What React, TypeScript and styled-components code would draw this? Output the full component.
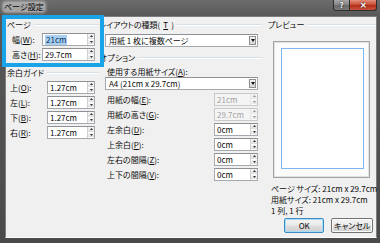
import React from 'react';
import styled, { createGlobalStyle } from 'styled-components';

const Global = createGlobalStyle`
  html, body { margin: 0; padding: 0; background: #3a3a3a; }
  body { font-family: "Noto Sans CJK JP", "Noto Sans", sans-serif; }
  * { box-sizing: border-box; }
`;

const Window = styled.div`
  position: relative;
  width: 380px;
  height: 243px;
  display: flex;
  flex-direction: column;
  padding: 0 3px 5px 5px;
  background: linear-gradient(#6d6d6d, #585858 16px, #4a4a4a);
  overflow: hidden;
  font-feature-settings: "palt";
`;

const TitleBar = styled.div`
  height: 16px;
  flex: none;
  display: flex;
  align-items: flex-start;
`;

const Title = styled.span`
  margin: 2px 0 0 -2px;
  padding: 0 1px;
  font-size: 8px;
  line-height: 10px;
  color: #000;
  background: rgba(220, 220, 220, 0.55);
  border-radius: 3px;
  box-shadow: 0 0 3px 1px rgba(220, 220, 220, 0.55);
`;

const Captions = styled.div`
  margin-left: auto;
  display: flex;
`;

const CaptionButton = styled.div<{ $close?: boolean }>`
  width: ${p => (p.$close ? 27 : 17)}px;
  height: 11px;
  display: flex;
  align-items: center;
  justify-content: center;
  border: 1px solid #2e2e2e;
  border-top: none;
  border-left: ${p => (p.$close ? 'none' : '1px solid #2e2e2e')};
  border-radius: ${p => (p.$close ? '0 0 3px 0' : '0 0 0 3px')};
  background: ${p =>
    p.$close
      ? 'linear-gradient(#e4907e, #c9503a 45%, #b5301b 55%, #c8533b)'
      : 'linear-gradient(#a8a8a8, #858585 45%, #6c6c6c 55%, #7a7a7a)'};
  color: #fff;
  font-size: 8px;
  font-weight: bold;
  line-height: 1;
  text-shadow: 0 0 2px #000;
`;

const Client = styled.div`
  flex: 1;
  display: grid;
  grid-template-columns: 94px 167px 1fr;
  background: #f0f0f0;
  border: 1px solid #7d7d7d;
  border-bottom: 1px solid #fff;
  font-size: 8px;
  color: #0a0a0a;
`;

const Column = styled.div<{ $pl: number }>`
  display: flex;
  flex-direction: column;
  padding-left: ${p => p.$pl}px;
`;

const GroupHeader = styled.div<{ $mt?: number; $mr?: number; $ml?: number }>`
  height: 15px;
  margin-top: ${p => p.$mt ?? 0}px;
  margin-right: ${p => p.$mr ?? 0}px;
  margin-left: ${p => p.$ml ?? 0}px;
  display: flex;
  align-items: center;
  gap: 3px;
  white-space: nowrap;
  &::after {
    content: '';
    flex: 1;
    height: 1px;
    background: #d5dfe5;
    box-shadow: 0 1px 0 #fff;
  }
`;

const Row = styled.div<{ $pl: number }>`
  height: 15px;
  display: flex;
  align-items: center;
  padding-left: ${p => p.$pl}px;
  white-space: nowrap;
`;

const Label = styled.span<{ $w: number }>`
  width: ${p => p.$w}px;
  flex: none;
`;

const InputBox = styled.div<{ $w: number; $disabled?: boolean }>`
  width: ${p => p.$w}px;
  height: 13px;
  flex: none;
  display: flex;
  align-items: stretch;
  border: 1px solid ${p => (p.$disabled ? '#c9c9c9' : '#a5a8ae')};
  border-top-color: ${p => (p.$disabled ? '#c9c9c9' : '#8e9096')};
  background: ${p => (p.$disabled ? '#f4f4f4' : '#fff')};
  color: ${p => (p.$disabled ? '#a3a3a3' : '#0a0a0a')};
`;

const InputText = styled.span`
  flex: 1;
  display: flex;
  align-items: center;
  padding-left: 2px;
  line-height: 11px;
`;

const Selected = styled.span`
  background: #a9d0f3;
  color: #11305a;
  padding: 0 1px;
  line-height: 10px;
`;

const Spinner = styled.div<{ $disabled?: boolean }>`
  width: 7px;
  flex: none;
  display: flex;
  flex-direction: column;
  border-left: 1px solid ${p => (p.$disabled ? '#e0e0e0' : '#d0d0d0')};
  opacity: ${p => (p.$disabled ? 0.5 : 1)};
`;

const SpinHalf = styled.div`
  flex: 1;
  display: flex;
  align-items: center;
  justify-content: center;
  background: linear-gradient(#f6f6f6, #dedede);
  border-bottom: 1px solid #fff;
`;

const Select = styled.div<{ $mt?: number }>`
  width: 153px;
  height: 13px;
  margin-top: ${p => p.$mt ?? 0}px;
  margin-left: 1px;
  display: flex;
  align-items: stretch;
  border: 1px solid #a5a8ae;
  border-top-color: #8e9096;
  background: #fff;
`;

const DropButton = styled.div`
  width: 7px;
  margin: 1px;
  border: 1px solid #8f8f8f;
  background: linear-gradient(#f4f4f4, #d6d6d6);
  display: flex;
  align-items: center;
  justify-content: center;
`;

const SubLabel = styled.div`
  height: 11px;
  margin-top: 1px;
  padding-left: 3px;
  line-height: 11px;
  white-space: nowrap;
`;

const Rows = styled.div<{ $mt?: number }>`
  margin-top: ${p => p.$mt ?? 0}px;
  display: flex;
  flex-direction: column;
`;

const PreviewFrame = styled.div`
  width: 97px;
  height: 137px;
  margin: 9px 0 0 5px;
  display: flex;
  padding: 6px 5px 8px 7px;
  border: 1px solid #a3a3a3;
  box-shadow: inset 0 0 0 1px #e2e2e2;
  background: #fbfbfb;
`;

const Page = styled.div`
  flex: 1;
  border: 1px solid #7db5ee;
  background: #fff;
`;

const InfoLines = styled.div`
  margin-top: 5px;
  padding-left: 3px;
  display: flex;
  flex-direction: column;
  white-space: nowrap;
`;

const InfoLine = styled.div`
  height: 11px;
  line-height: 11px;
`;

const Buttons = styled.div`
  margin-top: 2px;
  padding-right: 4px;
  display: flex;
  justify-content: flex-end;
  gap: 7px;
`;

const PushButton = styled.div<{ $default?: boolean; $w: number }>`
  width: ${p => p.$w}px;
  height: 15px;
  display: flex;
  align-items: center;
  justify-content: center;
  border: 1px solid ${p => (p.$default ? '#3d8bc4' : '#737373')};
  border-radius: 2px;
  background: linear-gradient(#f3f3f3, #ebebeb 45%, #dddddd 55%, #cfcfcf);
  box-shadow: inset 0 0 0 1px ${p => (p.$default ? '#a6dcf7' : '#fbfbfb')};
  color: #0a0a0a;
  line-height: 1;
`;

const Highlight = styled.div`
  position: absolute;
  left: 2px;
  top: 15px;
  width: 102px;
  height: 52px;
  border: 4px solid #19a3e8;
  pointer-events: none;
`;

const Up = () => (
  <svg width="3" height="2" viewBox="0 0 3 2"><path d="M1.5 0L3 2H0z" fill="#333" /></svg>
);
const Down = () => (
  <svg width="3" height="2" viewBox="0 0 3 2"><path d="M0 0h3L1.5 2z" fill="#333" /></svg>
);

const Spin: React.FC<{ w: number; value: React.ReactNode; disabled?: boolean }> = ({ w, value, disabled }) => (
  <InputBox $w={w} $disabled={disabled}>
    <InputText>{value}</InputText>
    <Spinner $disabled={disabled}>
      <SpinHalf><Up /></SpinHalf>
      <SpinHalf><Down /></SpinHalf>
    </Spinner>
  </InputBox>
);

const Combo: React.FC<{ text: string; mt?: number }> = ({ text, mt }) => (
  <Select $mt={mt}>
    <InputText style={{ paddingLeft: 3 }}>{text}</InputText>
    <DropButton>
      <svg width="4" height="3" viewBox="0 0 4 3"><path d="M0 0h4L2 3z" fill="#111" /></svg>
    </DropButton>
  </Select>
);

const marginRows: [string, string][] = [
  ['上', 'O'],
  ['左', 'L'],
  ['下', 'B'],
  ['右', 'R'],
];

const optionRows: { label: string; key: string; value: string; disabled?: boolean }[] = [
  { label: '用紙の幅', key: 'E', value: '21cm', disabled: true },
  { label: '用紙の高さ', key: 'G', value: '29.7cm', disabled: true },
  { label: '左余白', key: 'D', value: '0cm' },
  { label: '上余白', key: 'P', value: '0cm' },
  { label: '左右の間隔', key: 'Z', value: '0cm' },
  { label: '上下の間隔', key: 'V', value: '0cm' },
];

export default function App() {
  return (
    <>
      <Global />
      <Window>
        <TitleBar>
          <Title>ページ設定</Title>
          <Captions>
            <CaptionButton>?</CaptionButton>
            <CaptionButton $close>✕</CaptionButton>
          </Captions>
        </TitleBar>
        <Client>
          <Column $pl={1}>
            <GroupHeader $mr={1}>ページ</GroupHeader>
            <Row $pl={5}>
              <Label $w={30}>幅(<u>W</u>):</Label>
              <Spin w={53} value={<Selected>21cm</Selected>} />
            </Row>
            <Row $pl={5}>
              <Label $w={30}>高さ(<u>H</u>):</Label>
              <Spin w={53} value="29.7cm" />
            </Row>
            <GroupHeader $mt={3} $mr={1}>余白ガイド</GroupHeader>
            {marginRows.map(([c, k]) => (
              <Row $pl={3} key={k}>
                <Label $w={37}>{c}(<u>{k}</u>):</Label>
                <Spin w={48} value="1.27cm" />
              </Row>
            ))}
          </Column>
          <Column $pl={4}>
            <GroupHeader $mr={5} $ml={-5}>レイアウトの種類(<u>T</u>)</GroupHeader>
            <Combo mt={2} text="用紙 1 枚に複数ページ" />
            <GroupHeader $mt={3} $mr={5} $ml={-4}>オプション</GroupHeader>
            <SubLabel>使用する用紙サイズ(<u>A</u>):</SubLabel>
            <Combo text="A4 (21cm x 29.7cm)" />
            <Rows $mt={2}>
              {optionRows.map(r => (
                <Row $pl={3} key={r.key}>
                  <Label $w={107}>{r.label}(<u>{r.key}</u>):</Label>
                  <Spin w={44} value={r.value} disabled={r.disabled} />
                </Row>
              ))}
            </Rows>
          </Column>
          <Column $pl={1}>
            <GroupHeader $mr={1}>プレビュー</GroupHeader>
            <PreviewFrame>
              <Page />
            </PreviewFrame>
            <InfoLines>
              <InfoLine>ページ サイズ: 21cm x 29.7cm</InfoLine>
              <InfoLine>用紙サイズ: 21cm x 29.7cm</InfoLine>
              <InfoLine>1 列, 1 行</InfoLine>
            </InfoLines>
            <Buttons>
              <PushButton $default $w={40}>OK</PushButton>
              <PushButton $w={42}>キャンセル</PushButton>
            </Buttons>
          </Column>
        </Client>
        <Highlight />
      </Window>
    </>
  );
}
